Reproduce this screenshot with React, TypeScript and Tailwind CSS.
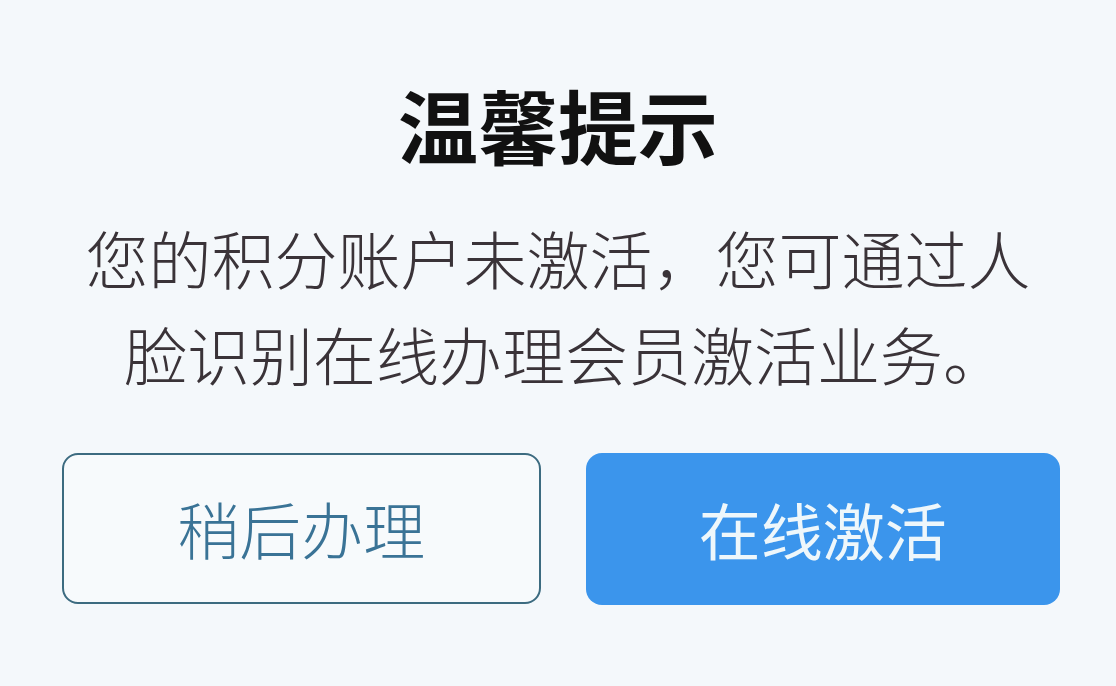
export default function App() {
  return (
    <div
      className="w-[1116px] h-[686px] bg-[#f4f8fb] flex flex-col items-center overflow-hidden"
      style={{ fontFamily: '"Noto Sans CJK SC", "Noto Sans", sans-serif' }}
    >
      <h1 className="mt-[79px] text-[80px] leading-[88px] font-bold text-[#111111]">
        温馨提示
      </h1>
      <p className="mt-[42px] text-[63px] leading-[96px] text-center text-[#3a3338] font-light">
        您的积分账户未激活，您可通过人
        <br />
        <span className="pl-[14px]">脸识别在线办理会员激活业务。</span>
      </p>
      <div className="mt-[52px] flex gap-[45px] w-full pl-[62px] pr-[56px]">
        <button className="flex-1 h-[151px] rounded-[16px] border-2 border-[#3c6b80] bg-[#f7fafc] text-[62px] font-light text-[#3a7396]">
          稍后办理
        </button>
        <button className="flex-1 h-[152px] rounded-[16px] bg-[#3b95ec] text-[62px] text-[#eef7fb]">
          在线激活
        </button>
      </div>
    </div>
  );
}
